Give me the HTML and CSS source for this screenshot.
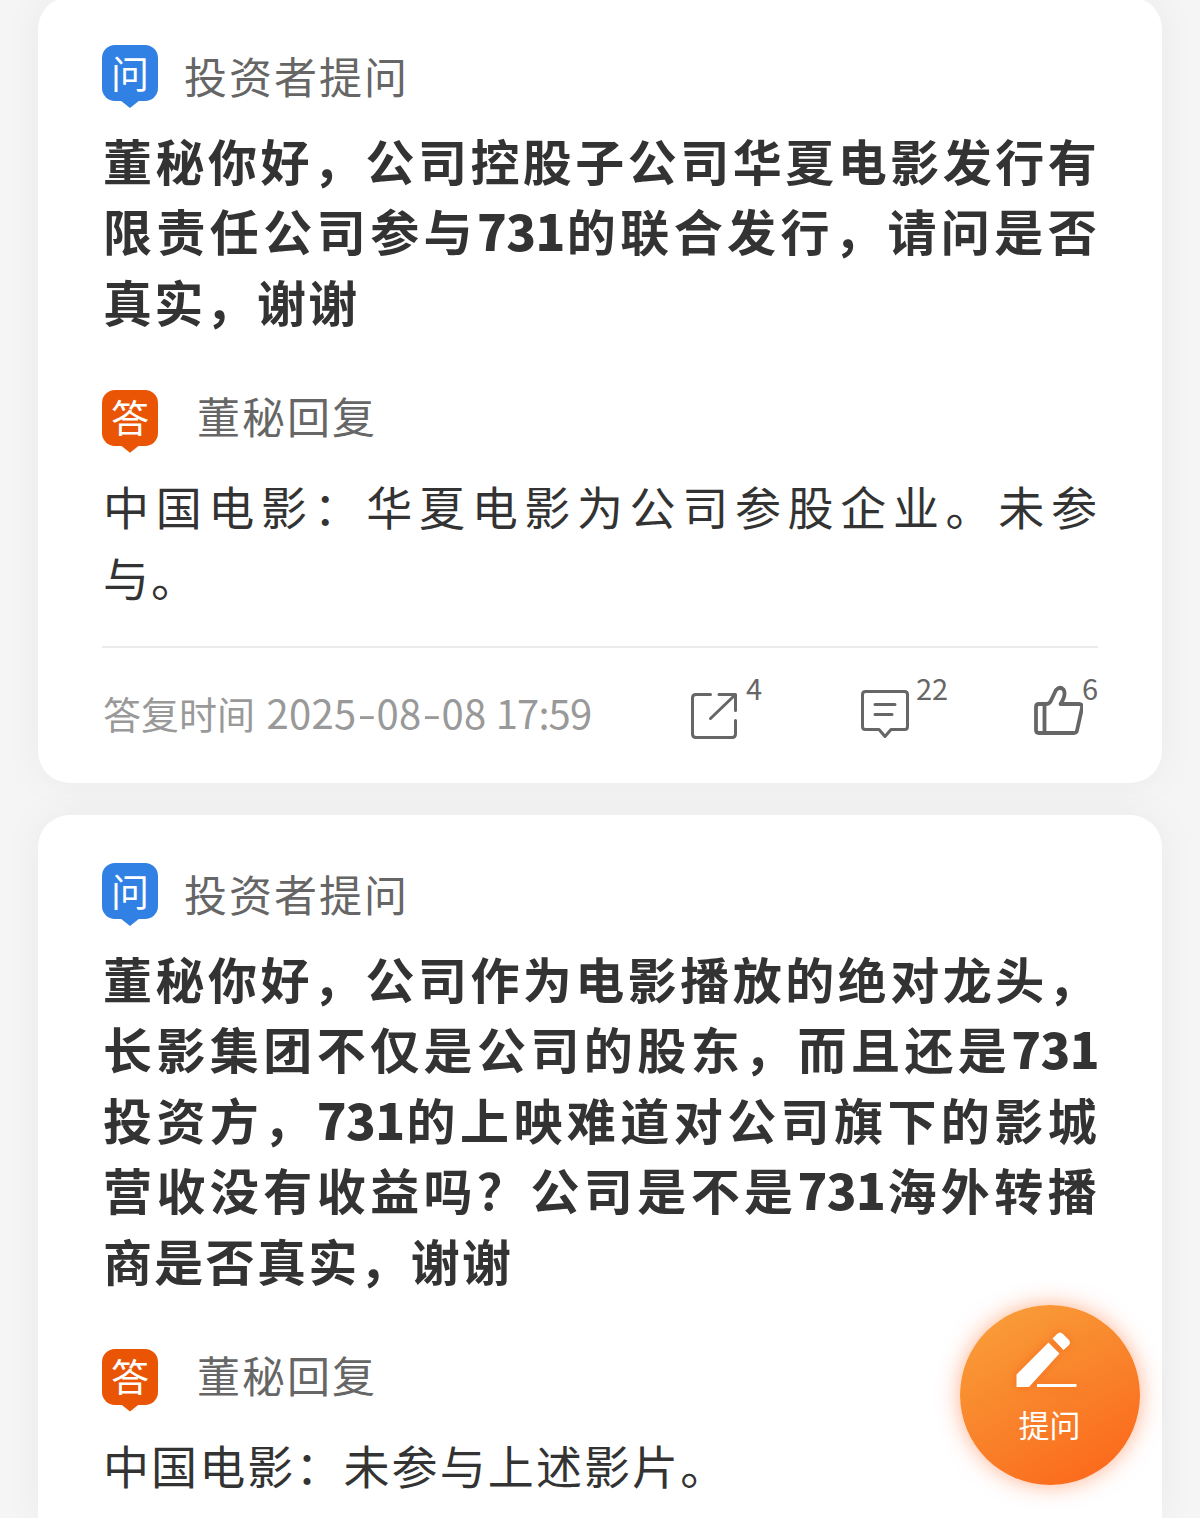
FILE: index.html
```
<!DOCTYPE html>
<html lang="zh-CN">
<head>
<meta charset="utf-8">
<title>投资者问答</title>
<link rel="stylesheet" href="styles.css">
</head>
<body>
<main class="feed">
  <article class="card">
    <header class="head"><span class="badge ask">问</span><span class="label">投资者提问</span></header>
    <h2 class="question">
      <span class="line full">董秘你好，公司控股子公司华夏电影发行有</span>
      <span class="line full">限责任公司参与<b>731</b>的联合发行，请问是否</span>
      <span class="line">真实，谢谢</span>
    </h2>
    <header class="head reply"><span class="badge answer">答</span><span class="label">董秘回复</span></header>
    <p class="response">
      <span class="line full">中国电影：华夏电影为公司参股企业。未参</span>
      <span class="line">与。</span>
    </p>
    <footer class="foot">
      <span class="time">答复时间 <span class="date">2025<i>-</i>08<i>-</i>08 <span class="clock">17:59</span></span></span>
      <span class="action">
        <svg width="50" height="64" viewBox="690 680 50 64"><path d="M710.5 694.5H696q-3.500 0-3.500 3.500V734q0 3.500 3.500 3.500H732q3.500 0 3.500-3.500V720.500M719 694.500H735.500V710.500M735 695L710.500 718.500"/></svg>
        <span class="count">4</span>
      </span>
      <span class="action">
        <svg width="50" height="64" viewBox="860 680 50 64"><path d="M865.500 691.500H904.500q3 0 3 3V726.500q0 3-3 3H891L885 736.500L879 729.500H865.500q-3 0-3-3V694.500q0-3 3-3ZM875 704.500H895M875 714.500H892"/></svg>
        <span class="count">22</span>
      </span>
      <span class="action like">
        <svg width="50" height="64" viewBox="1033 680 50 64"><path class="thick" d="M1043.500 704H1039q-3 0-3 3V730q0 3 3 3H1074q2.500 0 3-2.500L1082 708q.5-4-3-4H1060.500C1064.500 698 1065.500 693 1063.500 689.500Q1060 686 1056 690L1050.500 701.500Q1049 704 1046 704H1043.500ZM1044.500 704V733"/></svg>
        <span class="count">6</span>
      </span>
    </footer>
  </article>

  <article class="card">
    <header class="head"><span class="badge ask">问</span><span class="label">投资者提问</span></header>
    <h2 class="question">
      <span class="line full">董秘你好，公司作为电影播放的绝对龙头，</span>
      <span class="line full">长影集团不仅是公司的股东，而且还是<b>731</b></span>
      <span class="line full">投资方，<b>731</b>的上映难道对公司旗下的影城</span>
      <span class="line full">营收没有收益吗？公司是不是<b>731</b>海外转播</span>
      <span class="line">商是否真实，谢谢</span>
    </h2>
    <header class="head reply"><span class="badge answer">答</span><span class="label">董秘回复</span></header>
    <p class="response">
      <span class="line">中国电影：未参与上述影片。</span>
    </p>
  </article>
</main>
<button class="fab">
  <svg width="64" height="60" viewBox="1014 1330 64 60"><path d="M1048.500 1342.500L1059.500 1353.500L1029 1387H1016.500V1374.500ZM1052.500 1338.500L1057 1334Q1060 1331 1063 1334L1068.500 1339.500Q1071.500 1342.500 1068.500 1345.500L1063.500 1350ZM1037 1384H1076.500V1387H1037Z"/></svg>
  <span>提问</span>
</button>
</body>
</html>
```
FILE: styles.css
```
* { box-sizing: border-box; }
body {
  margin: 0;
  height: 1518px;
  position: relative;
  overflow: hidden;
  background: #f5f5f5;
  font-family: "Noto Sans CJK SC", sans-serif;
  color: #333;
}
.feed {
  display: flex;
  flex-direction: column;
  gap: 32px;
  margin-top: -3px;
  padding: 0 38px;
}
.card {
  padding: 48px 64px 0;
  border-radius: 32px;
  background: #fff;
  box-shadow: 0 0 40px rgba(0, 0, 0, .05);
}
.card:first-child { height: 786px; }
.card:last-child { height: 703px; border-radius: 32px 32px 0 0; }
.head { display: flex; align-items: center; height: 56px; }
.label {
  margin-left: 26px;
  padding-top: 4px;
  font-size: 43px;
  line-height: 56px;
  letter-spacing: 2px;
  color: #666;
}
.reply { margin-top: 53.6px; }
.reply .label { margin-left: 39px; padding: 0 0 6px; }
.badge {
  position: relative;
  width: 56px;
  height: 56px;
  border-radius: 13px;
  color: #fff;
  font-size: 38px;
  line-height: 53px;
  text-align: center;
}
.badge::after {
  content: "";
  position: absolute;
  left: 18px;
  top: 55px;
  width: 20px;
  height: 8px;
  background: inherit;
  clip-path: polygon(0 0, 100% 0, 50% 100%);
}
.ask { background: #3180e3; }
.answer { background: #e95504; line-height: 51px; }
.question { margin: 24px 0 0; padding-left: 1px; font-size: 49px; font-weight: 700; letter-spacing: 2.3px; }
.question b { letter-spacing: -.6px; }
.response { margin: 24.6px 0 0; padding-left: 1px; font-size: 46px; letter-spacing: 2.1px; }
.line {
  display: block;
  height: 70.4px;
  line-height: 70.4px;
  white-space: nowrap;
}
.full { text-align-last: justify; margin-right: -1px; }
.foot {
  display: grid;
  grid-template-columns: 588px 170px 173px 65px;
  margin-top: 35px;
  height: 130px;
  border-top: 2px solid #ebebeb;
  align-items: center;
}
.time { padding-left: 1px; font-size: 38px; color: #999; white-space: nowrap; }
.date { margin-left: 3px; font-size: 40px; letter-spacing: .3px; }
.date i { display: inline-block; width: 20px; text-align: center; font-style: normal; transform: scaleX(1.35); }
.clock { letter-spacing: -.9px; }
.action { display: flex; color: #666; gap: 6px; }
.action svg { flex: none; fill: none; stroke: #666; stroke-width: 3; stroke-linejoin: round; stroke-linecap: round; }
.action .thick { stroke-width: 3.8; }
.count { font-size: 29px; line-height: 14px; }
.like { gap: 0; }
.like .count { margin-left: -1px; }
.fab {
  position: absolute;
  left: 960px;
  top: 1305px;
  width: 180px;
  height: 180px;
  padding: 25px 0 0;
  display: flex;
  flex-direction: column;
  align-items: center;
  border: 0;
  border-radius: 50%;
  background: linear-gradient(150deg, #f99f3a 5%, #f9822a 52%, #fc681b 92%);
  box-shadow: 0 0 22px rgba(255, 100, 30, .5);
  color: #fff;
  font: 31px/46px "Noto Sans CJK SC", sans-serif;
}
.fab svg { fill: #fff; margin-right: 8px; filter: drop-shadow(0 0 5px rgba(245, 85, 20, .55)); }
.fab span { margin: 11px 1px 0 0; }
```
